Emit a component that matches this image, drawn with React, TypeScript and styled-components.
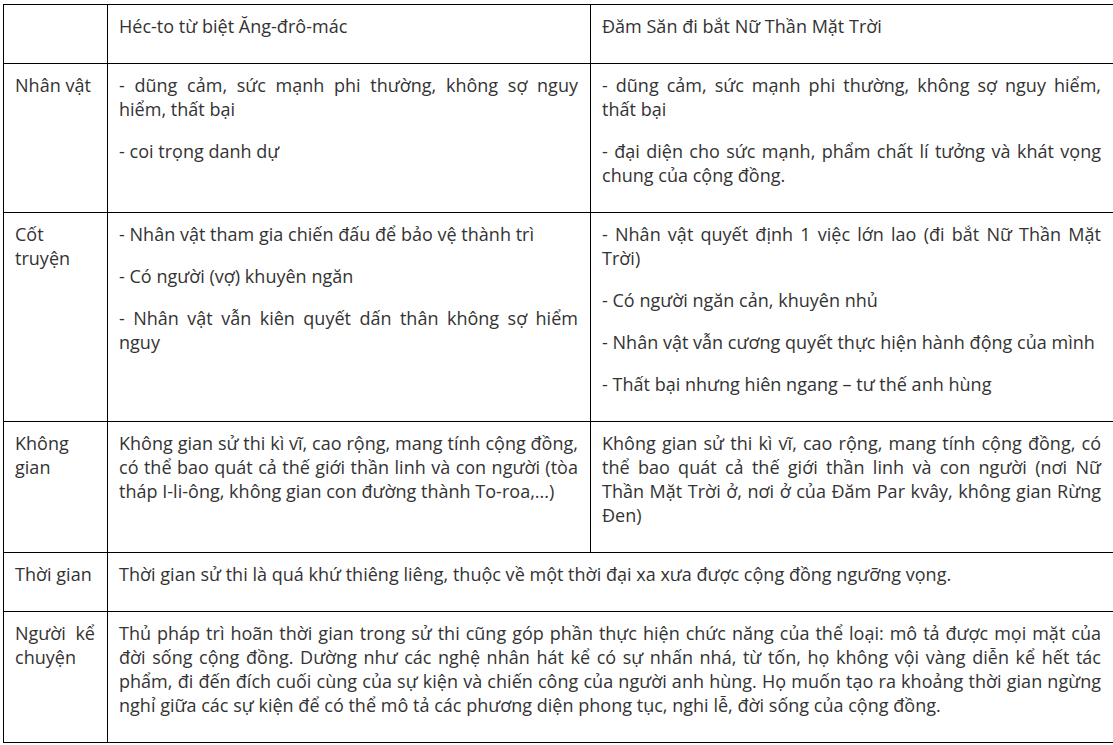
import React from "react";
import styled, { createGlobalStyle } from "styled-components";

const Global = createGlobalStyle`
  html, body { margin: 0; padding: 0; background: #fff; }
  body { font-family: "Open Sans", "Noto Sans", sans-serif; color: #333; }
`;

const Page = styled.div`
  padding: 4px 0 0 3px;
`;

const Table = styled.table`
  border-collapse: collapse;
  table-layout: fixed;
  width: 1110px;
  font-size: 18px;
  line-height: 24px;
  letter-spacing: 0.02px;
`;

const Col = styled.col<{ $w: number }>`
  width: ${(p) => p.$w}px;
`;

const Cell = styled.td`
  border: 1px solid #000;
  vertical-align: top;
  padding: 9px 12px 7px 11px;
  text-align: justify;
`;

const P = styled.p`
  margin: 0 0 18px 0;
`;

type Row = { label: string; cells: string[][] };

const rows: Row[] = [
  {
    label: "",
    cells: [["Héc-to từ biệt Ăng-đrô-mác"], ["Đăm Săn đi bắt Nữ Thần Mặt Trời"]],
  },
  {
    label: "Nhân vật",
    cells: [
      ["- dũng cảm, sức mạnh phi thường, không sợ nguy hiểm, thất bại", "- coi trọng danh dự"],
      [
        "- dũng cảm, sức mạnh phi thường, không sợ nguy hiểm, thất bại",
        "- đại diện cho sức mạnh, phẩm chất lí tưởng và khát vọng chung của cộng đồng.",
      ],
    ],
  },
  {
    label: "Cốt truyện",
    cells: [
      [
        "- Nhân vật tham gia chiến đấu để bảo vệ thành trì",
        "- Có người (vợ) khuyên ngăn",
        "- Nhân vật vẫn kiên quyết dấn thân không sợ hiểm nguy",
      ],
      [
        "- Nhân vật quyết định 1 việc lớn lao (đi bắt Nữ Thần Mặt Trời)",
        "- Có người ngăn cản, khuyên nhủ",
        "- Nhân vật vẫn cương quyết thực hiện hành động của mình",
        "- Thất bại nhưng hiên ngang – tư thế anh hùng",
      ],
    ],
  },
  {
    label: "Không gian",
    cells: [
      [
        "Không gian sử thi kì vĩ, cao rộng, mang tính cộng đồng, có thể bao quát cả thế giới thần linh và con người (tòa tháp I-li-ông, không gian con đường thành To-roa,...)",
      ],
      [
        "Không gian sử thi kì vĩ, cao rộng, mang tính cộng đồng, có thể bao quát cả thế giới thần linh và con người (nơi Nữ Thần Mặt Trời ở, nơi ở của Đăm Par kvây, không gian Rừng Đen)",
      ],
    ],
  },
  {
    label: "Thời gian",
    cells: [
      [
        "Thời gian sử thi là quá khứ thiêng liêng, thuộc về một thời đại xa xưa được cộng đồng ngưỡng vọng.",
      ],
    ],
  },
  {
    label: "Người kể chuyện",
    cells: [
      [
        "Thủ pháp trì hoãn thời gian trong sử thi cũng góp phần thực hiện chức năng của thể loại: mô tả được mọi mặt của đời sống cộng đồng. Dường như các nghệ nhân hát kể có sự nhấn nhá, từ tốn, họ không vội vàng diễn kể hết tác phẩm, đi đến đích cuối cùng của sự kiện và chiến công của người anh hùng. Họ muốn tạo ra khoảng thời gian ngừng nghỉ giữa các sự kiện để có thể mô tả các phương diện phong tục, nghi lễ, đời sống của cộng đồng.",
      ],
    ],
  },
];

export default function App() {
  return (
    <Page>
      <Global />
      <Table>
        <colgroup>
          <Col $w={104} />
          <Col $w={483} />
          <Col $w={523} />
        </colgroup>
        <tbody>
          {rows.map((r, i) => (
            <tr key={i}>
              <Cell>{r.label ? <P>{r.label}</P> : null}</Cell>
              {r.cells.map((c, j) => (
                <Cell key={j} colSpan={r.cells.length === 1 ? 2 : 1}>
                  {c.map((t, k) => (
                    <P key={k}>{t}</P>
                  ))}
                </Cell>
              ))}
            </tr>
          ))}
        </tbody>
      </Table>
    </Page>
  );
}
